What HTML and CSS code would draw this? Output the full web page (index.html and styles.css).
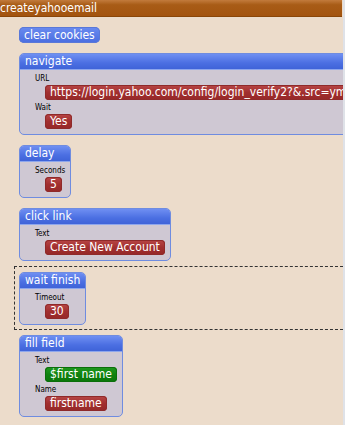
FILE: index.html
```html
<!DOCTYPE html>
<html>
<head>
  <meta charset="utf-8">
  <title>createyahooemail</title>
  <link rel="stylesheet" href="styles.css">
</head>
<body>
  <div class="page">
    <div class="header">createyahooemail</div>

    <div class="steps">
      <div class="step">
        <div class="chip">clear cookies</div>
      </div>

      <div class="step">
        <div class="block">
          <div class="block-title">navigate</div>
          <div class="block-body">
            <div class="label">URL</div>
            <div class="pill red">https://login.yahoo.com/config/login_verify2?&amp;.src=ym</div>
            <div class="label">Wait</div>
            <div class="pill red">Yes</div>
          </div>
        </div>
      </div>

      <div class="step">
        <div class="block">
          <div class="block-title">delay</div>
          <div class="block-body">
            <div class="label">Seconds</div>
            <div class="pill red">5</div>
          </div>
        </div>
      </div>

      <div class="step">
        <div class="block">
          <div class="block-title">click link</div>
          <div class="block-body">
            <div class="label">Text</div>
            <div class="pill red">Create New Account</div>
          </div>
        </div>
      </div>

      <div class="step selected">
        <div class="block">
          <div class="block-title">wait finish</div>
          <div class="block-body">
            <div class="label">Timeout</div>
            <div class="pill red">30</div>
          </div>
        </div>
      </div>

      <div class="step">
        <div class="block">
          <div class="block-title">fill field</div>
          <div class="block-body">
            <div class="label">Text</div>
            <div class="pill green">$first name</div>
            <div class="label">Name</div>
            <div class="pill red">firstname</div>
          </div>
        </div>
      </div>
    </div>
  </div>
</body>
</html>
```

FILE: styles.css
```css
html {
  background-color: #dfe2e8;
}

body {
  margin: 0;
  padding: 0;
  font-family: "DejaVu Sans Condensed", "DejaVu Sans", sans-serif;
  font-stretch: condensed;
}

.page {
  width: 343px;
  height: 425px;
  overflow: hidden;
  background-color: #ecdccb;
}

.header {
  width: 342px;
  height: 16px;
  line-height: 16px;
  font-size: 12px;
  color: #fff;
  background: linear-gradient(#c27b3c, #a85c16 30%, #a35410);
  border-bottom: 1px solid #8a4608;
  white-space: nowrap;
}

.steps {
  display: flex;
  flex-direction: column;
  padding: 5px 0 0 14px;
}

.step {
  display: flex;
  padding: 5px 0 5px 5px;
}

.selected {
  border: 1px dashed #333;
  border-right: none;
  padding: 5px 0 4px 4px;
}

.chip {
  height: 16px;
  line-height: 16px;
  padding: 0 5px;
  font-size: 12px;
  color: #fff;
  background: linear-gradient(#6a8bf0, #4a6de0);
  box-shadow: inset 0 0 0 1px #5a78d8;
  border-radius: 5px;
  white-space: nowrap;
}

.block {
  border: 1px solid #6f8ce0;
  border-radius: 5px;
  background-color: #cfc8d3;
  overflow: hidden;
  flex-shrink: 0;
}

.block-title {
  height: 15px;
  line-height: 15px;
  padding: 0 5px 0 5px;
  font-size: 12px;
  color: #fff;
  background: linear-gradient(#6f8ff2, #4b6fe2 60%, #3f63d8);
  border-bottom: 1px solid #8ea6ec;
  white-space: nowrap;
}

.block-body {
  display: flex;
  flex-direction: column;
  align-items: flex-start;
  padding: 4px 5px 5px 15px;
}

.label {
  font-size: 8px;
  line-height: 10px;
  height: 10px;
  color: #000;
}

.pill + .label {
  margin-top: 3px;
}

.pill {
  margin: 1px 0 0 10px;
  height: 15px;
  line-height: 15px;
  padding: 0 5px;
  font-size: 12px;
  color: #fff;
  border-radius: 4px;
  white-space: nowrap;
}

.red {
  background: linear-gradient(#b84646, #a12f2f 50%, #962828);
  box-shadow: inset 0 0 0 1px #8f2a2a;
}

.green {
  background: linear-gradient(#1f9a1f, #0f820f 50%, #0b760b);
  box-shadow: inset 0 0 0 1px #0b6e0b;
}
```
